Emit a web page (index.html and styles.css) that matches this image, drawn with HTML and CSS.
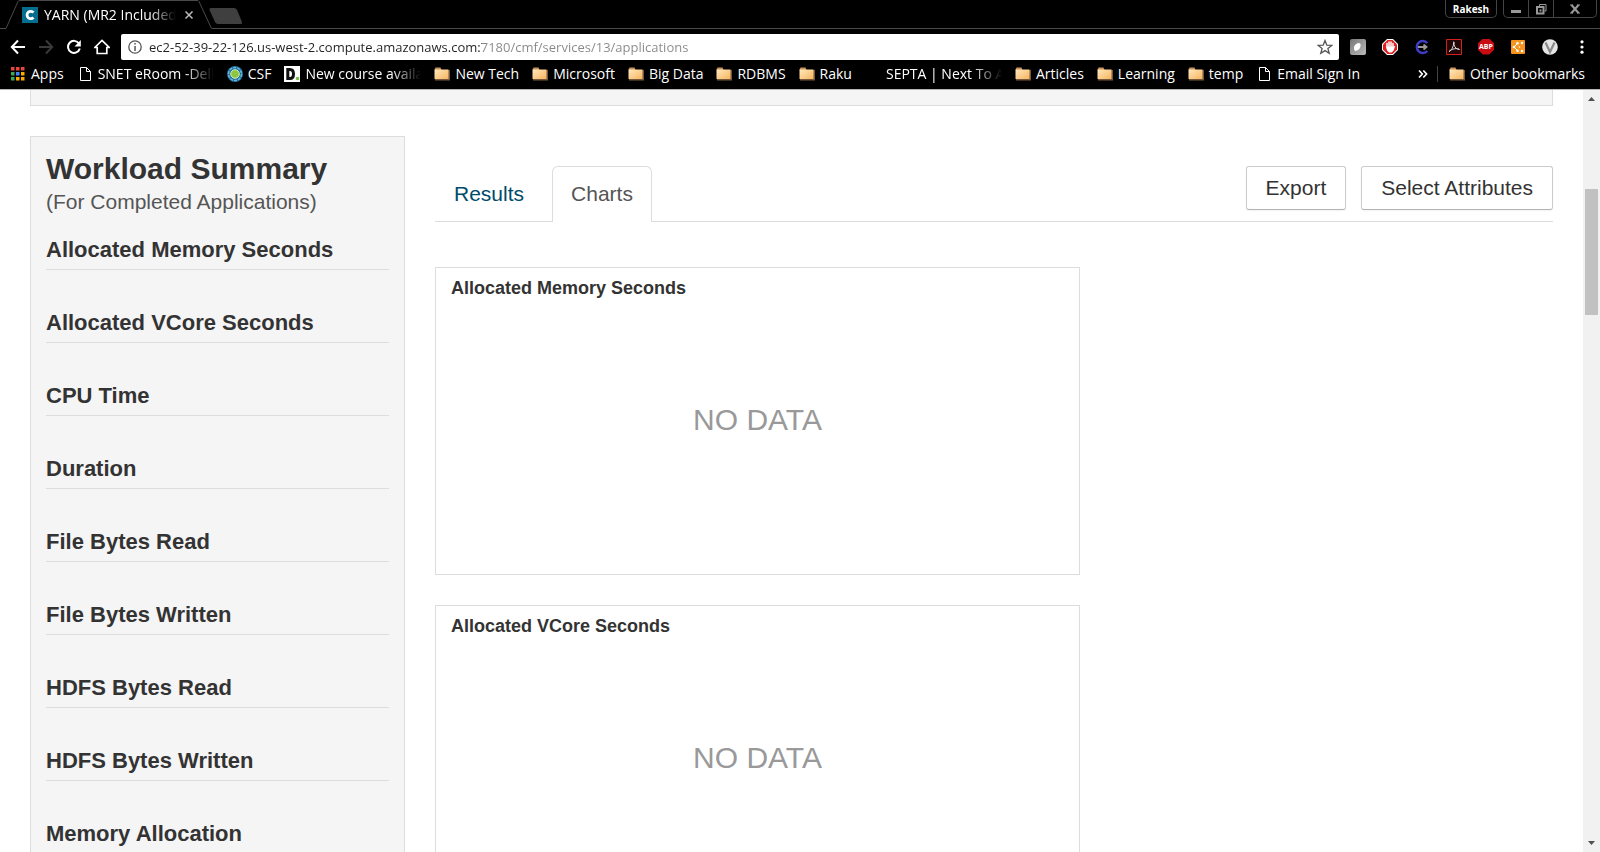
FILE: index.html
```html
<!DOCTYPE html>
<html lang="en">
<head>
<meta charset="utf-8">
<title>YARN (MR2 Included) - Applications</title>
<link rel="stylesheet" href="styles.css">
</head>
<body>
<svg class="defs" aria-hidden="true">
  <defs>
    <linearGradient id="folder-fill" x1="0" y1="0" x2="1" y2="1">
      <stop offset="0" stop-color="#ffe9bd"/><stop offset="1" stop-color="#f7b45f"/>
    </linearGradient>
    <linearGradient id="grey-fill" x1="0" y1="0" x2="1" y2="1">
      <stop offset="0" stop-color="#777"/><stop offset="1" stop-color="#bbb"/>
    </linearGradient>
    <symbol id="folder" viewBox="0 0 16 16">
      <path d="M2 4h14v10.500H1V5z" fill="#75583a"/>
      <path d="M.5 4l1-2.500h5l1 2.500z" fill="#c9925a"/>
      <path d="M.5 3.500h14V13H.5z" fill="url(#folder-fill)"/>
    </symbol>
    <symbol id="page" viewBox="0 0 16 16">
      <path d="M3.500 1.500h6l4 4v9h-10zM9.500 1.500v4h4" fill="none" stroke="#fff"/>
    </symbol>
  </defs>
</svg>

<header class="browser">
  <div class="tabstrip">
    <svg class="tab-shape" width="212" height="29" viewBox="0 0 212 29" aria-hidden="true"><path d="M0 28.500H6L18 1.500Q18.500.5 20 .5H197Q198.500.5 199 1.500L211.500 28.500" fill="none" stroke="#4a4a4a"/></svg>
    <div class="tab">
      <svg width="16" height="16" viewBox="0 0 16 16" aria-hidden="true"><path fill="#056d8d" d="M0 0h16v16H0z"/><path d="M11.500 5.500A3.700 3.700 0 1 0 11.500 10.500" fill="none" stroke="#fff" stroke-width="2.800"/></svg>
      <span class="tab-title">YARN (MR2 Included</span>
      <button class="bare" aria-label="Close tab"><svg width="8" height="8" viewBox="0 0 8 8"><path d="M.5.500l7 7M7.500.500l-7 7" stroke="#bbb" stroke-width="1.500"/></svg></button>
    </div>
    <button class="bare new-tab" aria-label="New tab"><svg width="36" height="18" viewBox="0 0 36 18"><path d="M3 1H26Q28 1 29 3L34 15Q34.500 17 33 17H10Q8 17 7 15L1.500 3Q1 1 3 1z" fill="#3f3f3f"/></svg></button>
    <button class="profile">Rakesh</button>
    <div class="window-controls">
      <button aria-label="Minimize"><svg width="10" height="12" viewBox="0 0 10 12"><path d="M0 7h10v3H0z" fill="#999"/></svg></button>
      <button aria-label="Restore"><svg width="11" height="12" viewBox="0 0 11 12"><path d="M3.500 3V1.500h6.500V8H8.500" fill="none" stroke="#999"/><path d="M1 4h6.500v6.500H1z" fill="none" stroke="#999" stroke-width="2"/><path d="M3.500 6.500h2v2h-2z" fill="#999"/></svg></button>
      <button class="wide" aria-label="Close"><svg width="10" height="10" viewBox="0 0 10 10"><path d="M1.500 1l7 8M8.500 1l-7 8" stroke="#999" stroke-width="2"/><path d="M0 1h3M7 1h3M0 9h3M7 9h3" stroke="#999"/></svg></button>
    </div>
  </div>

  <div class="toolbar">
    <div class="nav">
      <button class="bare" aria-label="Back"><svg width="16" height="16" viewBox="0 0 16 16"><path d="M15 8H2M8 1.500L1.800 8L8 14.500" fill="none" stroke="#fff" stroke-width="2"/></svg></button>
      <button class="bare" aria-label="Forward"><svg width="16" height="16" viewBox="0 0 16 16"><path d="M1 8H14M8 1.500L14.200 8L8 14.500" fill="none" stroke="#3a3a3a" stroke-width="2"/></svg></button>
      <button class="bare" aria-label="Reload"><svg width="16" height="16" viewBox="0 0 16 16"><path d="M13 4.500A6 6 0 1 0 13.800 9.500" fill="none" stroke="#fff" stroke-width="2"/><path d="M14.800 1v6.500H8.500z" fill="#fff"/></svg></button>
      <button class="bare" aria-label="Home"><svg width="16" height="16" viewBox="0 0 16 16"><path d="M.8 8.500L8 1.500L15.200 8.500H12.800V14.500H3.200V8.500z" fill="none" stroke="#fff" stroke-width="1.700"/></svg></button>
    </div>
    <form class="omnibox">
      <svg width="14" height="14" viewBox="0 0 14 14" aria-hidden="true"><circle cx="7" cy="7" r="6.200" fill="none" stroke="#555" stroke-width="1.300"/><path d="M6.300 3h1.500v1.500H6.300zM6.300 6h1.500v5H6.300z" fill="#555"/></svg>
      <input class="url" type="text" aria-label="Address" value="ec2-52-39-22-126.us-west-2.compute.amazonaws.com:7180/cmf/services/13/applications">
      <button type="button" class="bare" aria-label="Bookmark this page"><svg width="16" height="16" viewBox="0 0 16 16"><path d="M8 1.500L9.800 6.200L14.800 6.400L10.900 9.500L12.200 14.300L8 11.600L3.800 14.300L5.100 9.500L1.200 6.400L6.200 6.200z" fill="none" stroke="#555" stroke-width="1.300"/></svg></button>
    </form>
    <div class="extensions">
      <button class="bare" aria-label="Tracker extension"><svg width="16" height="16" viewBox="0 0 16 16"><rect width="16" height="16" rx="2" fill="url(#grey-fill)"/><path d="M5 12C3 9 4 6 7 4.500Q9 3.500 10.500 5C11 9 9 11.500 5 12z" fill="#fff"/></svg></button>
      <button class="bare" aria-label="Ad blocker"><svg width="16" height="16" viewBox="0 0 16 16"><path d="M5 0h6l5 5v6l-5 5H5l-5-5V5z" fill="#fff"/><path d="M5.400 1h5.200L15 5.400v5.200L10.600 15H5.400L1 10.600V5.400z" fill="#e02020"/><path d="M5 9V4.500M7 8V3M9 8V3M11 9V4.500" stroke="#fff" stroke-width="1.500" stroke-linecap="round"/><path d="M4.300 7.500h7.500l1.500-.8-1.800 5L9.500 13.500H7L5 11.500z" fill="#fff"/></svg></button>
      <button class="bare" aria-label="Redirect extension"><svg width="16" height="16" viewBox="0 0 16 16"><path d="M13.300 4A6 6 0 1 0 13.300 12" fill="none" stroke="#3d3dc8" stroke-width="2.500"/><path d="M4 8h8M9.500 5.500L12.500 8L9.500 10.500" fill="none" stroke="#999" stroke-width="1.800"/></svg></button>
      <button class="bare" aria-label="PDF tools"><svg width="16" height="16" viewBox="0 0 16 16"><path d="M.5.500h15v15H.5z" fill="#210606" stroke="#d0211c"/><path d="M3 12.500C5 12 8 7.500 7.500 3.500C7 2 9 3 8 5.500C8.500 8.500 11 10.500 13.500 10.500C12 8.500 5 10 3 12.500z" fill="none" stroke="#ddd"/></svg></button>
      <button class="bare abp" aria-label="Adblock Plus">ABP</button>
      <button class="bare" aria-label="Sharing extension"><svg width="16" height="16" viewBox="0 0 16 16"><rect x="1" y="1" width="14" height="14" rx="1" fill="#f7941e"/><path d="M4 8l3.500-3.500M4 8l3.500 3.500" stroke="#fff" stroke-width="1"/><g fill="#fff"><circle cx="4" cy="8" r="1.300"/><circle cx="7.500" cy="4.300" r="1.300"/><circle cx="7.500" cy="11.700" r="1.300"/><circle cx="12" cy="4" r="1.200"/><circle cx="12" cy="12" r="1.200"/><circle cx="9.500" cy="8" r=".8"/></g></svg></button>
      <button class="bare" aria-label="Video extension"><svg width="16" height="16" viewBox="0 0 16 16"><circle cx="8" cy="8" r="7.800" fill="#e6e6e6"/><path d="M3.500 3.500L8 13L12.500 3.500" fill="none" stroke="#8a8a8a" stroke-width="2.200"/></svg></button>
      <button class="bare" aria-label="Menu"><svg width="16" height="16" viewBox="0 0 16 16"><g fill="#fff"><circle cx="8" cy="2.800" r="1.600"/><circle cx="8" cy="8" r="1.600"/><circle cx="8" cy="13.200" r="1.600"/></g></svg></button>
    </div>
  </div>

  <nav class="bookmarks" aria-label="Bookmarks">
    <a class="apps" href="#"><svg width="14" height="14" viewBox="0 0 14 14"><path d="M0 0h3.500v3.500H0zM5 0h3.500v3.500H5zM10 0h3.500v3.500H10z" fill="#e8453c"/><path d="M0 5h3.500v3.500H0zM0 10h3.500v3.500H0z" fill="#34a853"/><path d="M5 5h3.500v3.500H5z" fill="#4285f4"/><path d="M10 5h3.500v3.500H10zM5 10h3.500v3.500H5zM10 10h3.500v3.500H10z" fill="#f9ab00"/></svg><span>Apps</span></a>
    <a href="#"><svg class="ico"><use href="#page"/></svg><span class="fade">SNET eRoom -Dell</span></a>
    <a href="#"><svg class="ico" viewBox="0 0 16 16"><circle cx="8" cy="8" r="8" fill="#1b6fa0"/><circle cx="8" cy="8" r="6.500" fill="none" stroke="#6fb4d6" stroke-width="1.500" stroke-dasharray="3 1"/><circle cx="8" cy="8" r="4.300" fill="#8dc63f" stroke="#d9f0c0"/></svg><span>CSF</span></a>
    <a href="#"><svg class="ico" viewBox="0 0 16 16"><path fill="#fff" d="M0 0h16v16H0z"/><path d="M3.800 3.500H6Q9.500 3.500 9.500 8T6 12.500H3.800z" fill="none" stroke="#111" stroke-width="3"/><circle cx="13.500" cy="12.500" r="1.800" fill="#7ac143"/></svg><span class="fade">New course availa</span></a>
    <a href="#"><svg class="ico"><use href="#folder"/></svg><span>New Tech</span></a>
    <a href="#"><svg class="ico"><use href="#folder"/></svg><span>Microsoft</span></a>
    <a href="#"><svg class="ico"><use href="#folder"/></svg><span>Big Data</span></a>
    <a href="#"><svg class="ico"><use href="#folder"/></svg><span>RDBMS</span></a>
    <a href="#"><svg class="ico"><use href="#folder"/></svg><span>Raku</span></a>
    <a href="#"><svg class="ico"></svg><span class="fade">SEPTA | Next To A</span></a>
    <a href="#"><svg class="ico"><use href="#folder"/></svg><span>Articles</span></a>
    <a href="#"><svg class="ico"><use href="#folder"/></svg><span>Learning</span></a>
    <a href="#"><svg class="ico"><use href="#folder"/></svg><span>temp</span></a>
    <a href="#"><svg class="ico"><use href="#page"/></svg><span>Email Sign In</span></a>
    <div class="bookmarks-end">
      <button class="bare" aria-label="More bookmarks"><svg width="10" height="8" viewBox="0 0 10 8"><path d="M1 .5L4.300 4L1 7.500M5.300 .5L8.600 4L5.300 7.500" fill="none" stroke="#fff" stroke-width="1.600"/></svg></button>
      <a class="other" href="#"><svg class="ico"><use href="#folder"/></svg><span>Other bookmarks</span></a>
    </div>
  </nav>
</header>

<div class="viewport">
  <div class="page">
    <div class="filter-panel"></div>
    <div class="columns">
      <aside class="summary">
        <h2>Workload Summary</h2>
        <p>(For Completed Applications)</p>
        <h3>Allocated Memory Seconds</h3>
        <h3>Allocated VCore Seconds</h3>
        <h3>CPU Time</h3>
        <h3>Duration</h3>
        <h3>File Bytes Read</h3>
        <h3>File Bytes Written</h3>
        <h3>HDFS Bytes Read</h3>
        <h3>HDFS Bytes Written</h3>
        <h3>Memory Allocation</h3>
      </aside>
      <main>
        <div class="tabs">
          <a href="#">Results</a>
          <a class="active" href="#" aria-current="page">Charts</a>
          <div class="actions">
            <button class="btn">Export</button>
            <button class="btn">Select Attributes</button>
          </div>
        </div>
        <div class="charts">
          <section class="chart"><h4>Allocated Memory Seconds</h4><p>NO DATA</p></section>
          <section class="chart"><h4>Allocated VCore Seconds</h4><p>NO DATA</p></section>
        </div>
      </main>
    </div>
  </div>
  <div class="scrollbar" aria-hidden="true">
    <svg width="7" height="4" viewBox="0 0 7 4"><path d="M0 4L3.500 0L7 4z" fill="#505050"/></svg>
    <div class="track"><div class="thumb"></div></div>
    <svg width="7" height="4" viewBox="0 0 7 4"><path d="M0 0L3.500 4L7 0z" fill="#505050"/></svg>
  </div>
</div>
</body>
</html>
```
FILE: styles.css
```css
* { box-sizing: border-box; }

body {
  margin: 0;
  height: 100vh;
  overflow: hidden;
  display: flex;
  flex-direction: column;
  background: #fff;
  color: #333;
  font: 21px/30px "Liberation Sans", Arial, sans-serif;
}

h2, h3, h4, p { margin: 0; }
a { text-decoration: none; }
svg { display: block; flex: none; }
.defs { position: absolute; width: 0; height: 0; }

.bare {
  display: block;
  padding: 0;
  border: 0;
  background: none;
}

/* Browser chrome */
.browser {
  flex: none;
  background: #000;
  color: #fff;
  border-bottom: 1px solid #b5b5b5;
  font: 14px/20px "Open Sans", "Noto Sans", sans-serif;
}

.tabstrip {
  position: relative;
  display: flex;
  align-items: flex-start;
  height: 29px;
  background: linear-gradient(#4a4a4a, #4a4a4a) 212px 28px / 100% 1px no-repeat;
}
.tab-shape { position: absolute; left: 0; top: 0; }
.tab {
  display: flex;
  align-items: center;
  width: 208px;
  height: 29px;
  padding: 0 15px 0 22px;
}
.tab-title {
  width: 132px;
  margin: 0 9px 0 6px;
  overflow: hidden;
  white-space: nowrap;
  -webkit-mask-image: linear-gradient(to right, #000 105px, transparent 132px);
  mask-image: linear-gradient(to right, #000 105px, transparent 132px);
}
.new-tab { margin-top: 7px; }

.profile, .window-controls {
  border: 1px solid #444;
  border-top: 0;
  border-radius: 0 0 5px 5px;
  background: #000;
}
.profile {
  height: 18px;
  width: 52px;
  margin-left: auto;
  padding: 0;
  color: #fff;
  font: bold 10px/16px "Open Sans", sans-serif;
}
.window-controls {
  display: flex;
  height: 18px;
  margin: 0 3px 0 6px;
}
.window-controls button {
  display: flex;
  align-items: center;
  justify-content: center;
  width: 25px;
  padding: 0;
  border: 0;
  border-right: 1px solid #444;
  background: none;
}
.window-controls .wide { width: 42px; border-right: 0; }

.toolbar {
  display: flex;
  align-items: center;
  height: 31px;
  padding: 4px 10px 0;
}
.nav { display: flex; gap: 12px; margin-right: 11px; }
.omnibox {
  flex: 1;
  display: flex;
  align-items: center;
  height: 26px;
  margin: 0;
  padding: 0 6px 0 7px;
  border-radius: 2px;
  background: #fff;
}
.url {
  flex: 1;
  min-width: 0;
  height: 20px;
  margin: 0 7px;
  padding: 0;
  border: 0;
  outline: 0;
  font: 13px/20px "Open Sans", "Noto Sans", sans-serif;
  color: transparent;
  background: linear-gradient(to right, #222 333px, #888 333px);
  -webkit-background-clip: text;
  background-clip: text;
}
.extensions { display: flex; align-items: center; gap: 16px; margin-left: 11px; }
.abp {
  width: 16px;
  height: 16px;
  background: #c70d12;
  clip-path: polygon(30% 0, 70% 0, 100% 30%, 100% 70%, 70% 100%, 30% 100%, 0 70%, 0 30%);
  color: #fff;
  font: bold 7px/16px "Open Sans", sans-serif;
  text-align: center;
}

.bookmarks {
  display: flex;
  align-items: center;
  gap: 13px;
  height: 29px;
  padding: 0 15px 2px 11px;
  white-space: nowrap;
}
.bookmarks a { display: flex; align-items: center; gap: 5px; color: #fff; }
.bookmarks .apps { gap: 6px; }
.ico { width: 16px; height: 16px; }
.fade {
  width: 116px;
  overflow: hidden;
  -webkit-mask-image: linear-gradient(to right, #000 86px, transparent 116px);
  mask-image: linear-gradient(to right, #000 86px, transparent 116px);
}
.bookmarks-end { display: flex; align-items: center; gap: 9px; margin-left: auto; }
.bookmarks-end .other { padding-left: 11px; border-left: 1px solid #444; height: 16px; }

/* Page */
.viewport { flex: 1; min-height: 0; display: flex; }
.page {
  flex: 1;
  min-width: 0;
  padding: 0 30px;
  overflow: hidden;
}
.filter-panel {
  height: 16px;
  border: 1px solid #ddd;
  border-top: 0;
  background: #f5f5f5;
}
.columns {
  display: flex;
  align-items: flex-start;
  gap: 30px;
  margin-top: 30px;
}

.summary {
  flex: 0 0 375px;
  padding: 15px;
  border: 1px solid #ddd;
  background: #f5f5f5;
}
.summary h2 { font-size: 30px; line-height: 34px; }
.summary p { margin-bottom: 18px; line-height: 32px; color: #555; }
.summary h3 {
  margin-bottom: 39px;
  padding-bottom: 6px;
  border-bottom: 1px solid #ddd;
  font-size: 22px;
  line-height: 27px;
}

main { flex: 1; min-width: 0; padding-top: 30px; }
.tabs {
  display: flex;
  align-items: flex-start;
  height: 56px;
  gap: 9px;
  border-bottom: 1px solid #ddd;
}
.tabs a {
  height: 56px;
  padding: 12px 18px;
  border: 1px solid transparent;
  border-bottom: 0;
  border-radius: 6px 6px 0 0;
  color: #004b6b;
}
.tabs .active { border-color: #ddd; background: #fff; color: #555; }
.actions { display: flex; gap: 15px; margin-left: auto; }
.btn {
  height: 44px;
  padding: 0 19px;
  border: 1px solid #ccc;
  border-bottom-color: #b3b3b3;
  border-radius: 3px;
  background: #fff;
  box-shadow: 0 1px 2px rgba(0, 0, 0, 0.05);
  color: #333;
  font: inherit;
}

.charts {
  display: grid;
  gap: 30px;
  max-width: 645px;
  margin-top: 45px;
}
.chart {
  min-height: 308px;
  padding: 5px 15px;
  border: 1px solid #ddd;
}
.chart h4 { font-size: 18px; line-height: 30px; }
.chart p {
  padding-top: 99px;
  color: #999;
  font-size: 30px;
  line-height: 36px;
  text-align: center;
}

.scrollbar {
  flex: none;
  display: flex;
  flex-direction: column;
  align-items: center;
  width: 17px;
  padding: 7px 2px;
  background: #f1f1f1;
}
.track { flex: 1; align-self: stretch; padding: 88px 0; }
.thumb { height: 126px; background: #c1c1c1; }
```
